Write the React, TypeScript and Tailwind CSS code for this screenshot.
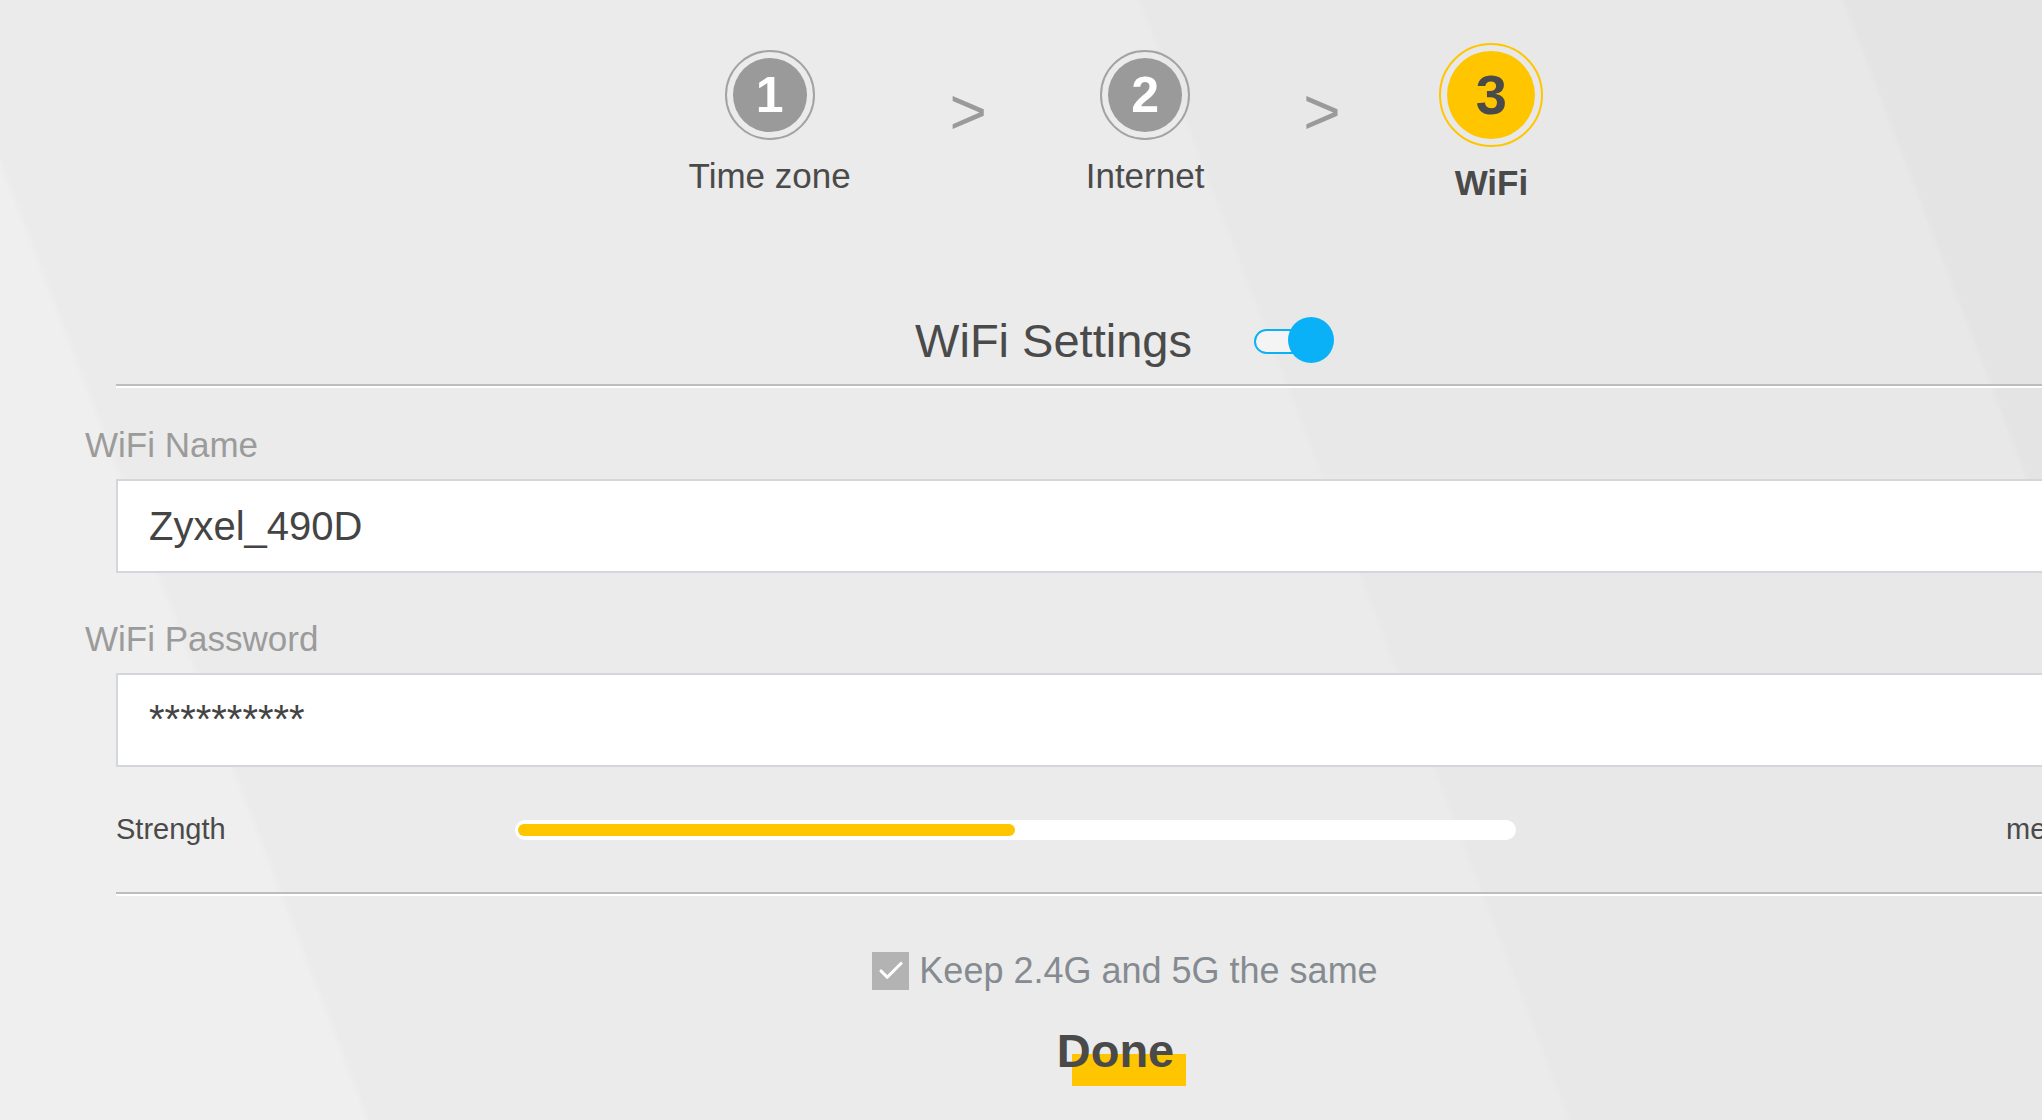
import { Check } from 'lucide-react';

interface Step {
  num: string;
  label: string;
  active?: boolean;
}

const steps: Step[] = [
  { num: '1', label: 'Time zone' },
  { num: '2', label: 'Internet' },
  { num: '3', label: 'WiFi', active: true },
];

function StepItem({ step }: { step: Step }) {
  if (step.active) {
    return (
      <div className="flex flex-col items-center">
        <div className="w-[104px] h-[104px] rounded-full border-2 border-[#ffc600] p-[6px]">
          <div className="w-full h-full rounded-full bg-[#ffc600] flex items-center justify-center text-[56px] font-bold leading-none text-[#4a4a4a]">
            {step.num}
          </div>
        </div>
        <div className="mt-[16px] text-[35px] leading-[40px] font-bold text-[#4a4a4a]">{step.label}</div>
      </div>
    );
  }
  return (
    <div className="flex flex-col items-center pt-[7px]">
      <div className="w-[90px] h-[90px] rounded-full border-2 border-[#a3a3a3] p-[6px]">
        <div className="w-full h-full rounded-full bg-[#9a9a9a] flex items-center justify-center text-[50px] font-bold leading-none text-white">
          {step.num}
        </div>
      </div>
      <div className="mt-[16px] text-[35px] leading-[40px] text-[#4a4a4a]">{step.label}</div>
    </div>
  );
}

function Arrow() {
  return (
    <div className="mt-[37px] w-[31px] h-[64px] flex justify-center text-[64px] leading-[64px] text-[#9a9a9a]">
      &gt;
    </div>
  );
}

export default function App() {
  return (
    <div className="h-screen w-full overflow-hidden font-['Liberation_Sans',Arial,sans-serif] bg-[linear-gradient(69deg,#efefef_340px,#ebebeb_347px,#ebebeb_1462px,#e8e8e8_1468px,#e8e8e8_2119px,#e4e4e4_2125px)]">
      <div className="pl-[116px]">
        <div className="w-[2010px]">
          {/* Steps */}
          <div className="flex justify-center items-start gap-[102px] pt-[43px] pr-[10px]">
            <StepItem step={steps[0]} />
            <Arrow />
            <StepItem step={steps[1]} />
            <Arrow />
            <StepItem step={steps[2]} />
          </div>

          {/* Title */}
          <div className="mt-[113px] h-[48px] flex items-center justify-center gap-[62px] pl-[7px]">
            <h1 className="text-[47px] leading-none text-[#4a4a4a]">WiFi Settings</h1>
            <div className="relative w-[80px] h-[46px]">
              <div className="absolute left-0 top-[12px] w-[66px] h-[25px] rounded-full border-2 border-[#0ab1f7] bg-[#f4f4f4]" />
              <div className="absolute right-0 top-0 w-[46px] h-[46px] rounded-full bg-[#0ab1f7]" />
            </div>
          </div>
          <div className="mt-[20px] h-[2px] bg-[#bdbdbd] shadow-[0_2px_0_#ffffff]" />

          {/* WiFi name */}
          <div className="mt-[41px] -ml-[31px] text-[35px] leading-none text-[#9b9b9b]">WiFi Name</div>
          <div className="mt-[17px] h-[94px] border-2 border-[#d3d7db] bg-white flex items-center pl-[31px] text-[40px] text-[#444]">
            Zyxel_490D
          </div>

          {/* WiFi password */}
          <div className="mt-[48px] -ml-[31px] text-[35px] leading-none text-[#9b9b9b]">WiFi Password</div>
          <div className="mt-[17px] h-[94px] border-2 border-[#d3d7db] bg-white flex items-center pl-[31px] pb-[3px] text-[40px] text-[#444]">
            **********
          </div>

          {/* Strength */}
          <div className="mt-[43px] h-[40px] flex items-center text-[29px] text-[#4a4a4a]">
            <span className="w-[399px]">Strength</span>
            <div className="w-[1001px] h-[20px] rounded-full bg-white pl-[3px] pt-[4px]">
              <div className="w-[497px] h-[12px] rounded-full bg-[#ffc600]" />
            </div>
            <span className="ml-[490px]">medium</span>
          </div>
          <div className="mt-[42px] h-[2px] bg-[#bdbdbd] shadow-[0_2px_0_#ffffff]" />

          {/* Keep same */}
          <div className="mt-[58px] h-[38px] flex items-center justify-center gap-[10px] pl-[8px]">
            <div className="w-[37px] h-[38px] bg-[#b3b3b3] flex items-center justify-center">
              <Check className="w-[30px] h-[30px] text-white" strokeWidth={2.5} />
            </div>
            <span className="text-[36px] leading-[38px] text-[#858b91]">Keep 2.4G and 5G the same</span>
          </div>

          {/* Done */}
          <div className="mt-[37px] flex justify-center pr-[11px]">
            <button className="relative text-[47px] leading-none font-bold text-[#4a4a4a]">
              <span className="absolute left-[15px] top-[27px] w-[114px] h-[32px] bg-[#ffc600]" />
              <span className="relative">Done</span>
            </button>
          </div>
        </div>
      </div>
    </div>
  );
}
